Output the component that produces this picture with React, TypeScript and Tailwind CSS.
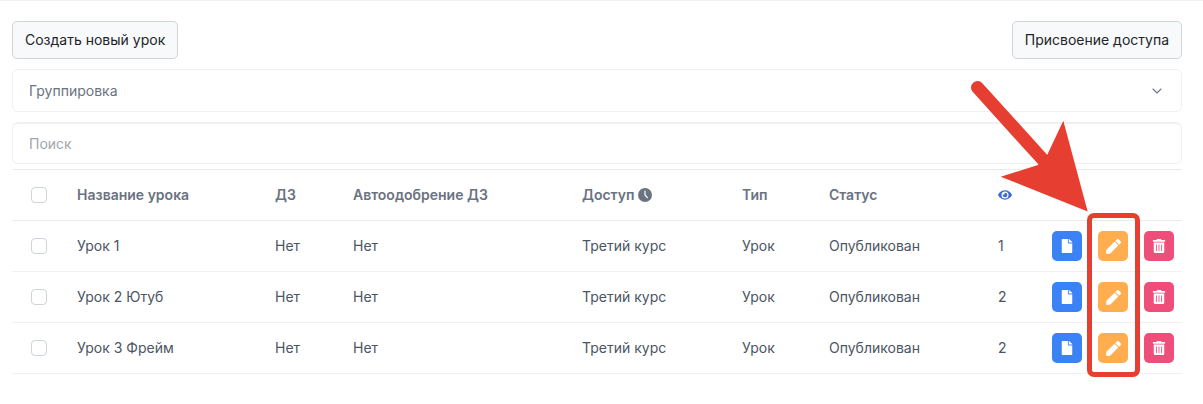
import React from "react";

const gridCols = "grid grid-cols-[65px_198px_78px_229px_160px_87px_169px_54px_1fr] items-center";

function FileIcon() {
  return (
    <svg viewBox="0 0 384 512" className="h-[14px] w-[14px]" fill="#fff">
      <path d="M224 136V0H24C10.7 0 0 10.7 0 24v464c0 13.3 10.7 24 24 24h336c13.3 0 24-10.7 24-24V160H248c-13.2 0-24-10.8-24-24zm160-14.1v6.1H256V0h6.1c6.4 0 12.5 2.5 17 7l97.9 98c4.5 4.5 7 10.6 7 16.9z" />
    </svg>
  );
}
function PenIcon() {
  return (
    <svg viewBox="0 0 512 512" className="h-[15px] w-[15px]" fill="#fff">
      <path d="M290.74 93.24l128.02 128.02-277.99 277.99-114.14 12.6C11.35 513.54-1.56 500.62.14 485.34l12.7-114.22 277.9-277.88zm207.2-19.06l-60.11-60.11c-18.75-18.75-49.16-18.75-67.91 0l-56.55 56.55 128.02 128.02 56.55-56.55c18.75-18.76 18.75-49.16 0-67.91z" />
    </svg>
  );
}
function TrashIcon() {
  return (
    <svg viewBox="0 0 448 512" className="h-[14px] w-[14px]" fill="#fff">
      <path d="M32 464a48 48 0 0 0 48 48h288a48 48 0 0 0 48-48V128H32zm272-256a16 16 0 0 1 32 0v224a16 16 0 0 1-32 0zm-96 0a16 16 0 0 1 32 0v224a16 16 0 0 1-32 0zm-96 0a16 16 0 0 1 32 0v224a16 16 0 0 1-32 0zM432 32H312l-9.4-18.7A24 24 0 0 0 281.1 0H166.8a23.72 23.72 0 0 0-21.4 13.3L136 32H16A16 16 0 0 0 0 48v32a16 16 0 0 0 16 16h416a16 16 0 0 0 16-16V48a16 16 0 0 0-16-16z" />
    </svg>
  );
}
function Checkbox() {
  return <span className="ml-[19px] block h-4 w-4 rounded-[4px] border border-[#ced4da] bg-white" />;
}

const rows = [
  ["Урок 1", "1"],
  ["Урок 2 Ютуб", "2"],
  ["Урок 3 Фрейм", "2"],
];

export default function App() {
  return (
    <div className="relative h-[404px] w-[1203px] overflow-hidden border-t border-[#eff0f6] bg-white font-['Inter',sans-serif] text-sm text-[#4b5563]">
      <div className="ml-3 mr-[21px] pt-5">
        <div className="flex justify-between">
          <button className="h-[38px] rounded-[5px] border border-[#ced4da] bg-[#f8f9fa] px-3 text-[#212529]">Создать новый урок</button>
          <button className="h-[38px] rounded-[5px] border border-[#ced4da] bg-[#f8f9fa] px-3 text-[#212529]">Присвоение доступа</button>
        </div>
        <div className="mt-[10px] flex h-[43px] items-center justify-between rounded-[6px] border border-[#eff0f6] pl-4 pr-4 text-[#6b7280]">
          <span>Группировка</span>
          <svg viewBox="0 0 16 16" className="h-4 w-4" fill="none" stroke="#6b7a90" strokeWidth="1.1" strokeLinecap="round" strokeLinejoin="round">
            <path d="M4 6l4 4 4-4" />
          </svg>
        </div>
        <div className="mt-[10px] flex h-[42px] items-center rounded-[6px] border border-[#eff0f6] border-t-2 pl-4 text-[#a0a5ad]">Поиск</div>
        <div className={`${gridCols} mt-[5px] h-[52px] border-y border-[#e9ecef] font-semibold text-[#6b7280]`}>
          <Checkbox />
          <span>Название урока</span>
          <span>ДЗ</span>
          <span>Автоодобрение ДЗ</span>
          <span className="flex items-center gap-1">
            Доступ
            <svg viewBox="0 0 14 14" className="h-[14px] w-[14px]">
              <circle cx="7" cy="7" r="7" fill="#6b7280" />
              <path d="M7 3v4l2.4 2.6" fill="none" stroke="#fff" strokeWidth="1.2" strokeLinecap="round" />
            </svg>
          </span>
          <span>Тип</span>
          <span>Статус</span>
          <svg viewBox="0 0 576 512" className="h-[14px] w-[14px]" fill="#3f6ad8">
            <path d="M572.52 241.4C518.29 135.59 410.93 64 288 64S57.68 135.64 3.48 241.41a32.35 32.35 0 0 0 0 29.19C57.71 376.41 165.07 448 288 448s230.32-71.64 284.52-177.41a32.35 32.35 0 0 0 0-29.19zM288 400a144 144 0 1 1 144-144 143.93 143.93 0 0 1-144 144zm0-240a95.31 95.31 0 0 0-25.31 3.79 47.85 47.85 0 0 1-66.9 66.9A95.78 95.78 0 1 0 288 160z" />
          </svg>
          <span />
        </div>
        {rows.map(([name, n]) => (
          <div key={name} className={`${gridCols} h-[51px] border-b border-[#eff0f6]`}>
            <Checkbox />
            <span>{name}</span>
            <span>Нет</span>
            <span>Нет</span>
            <span>Третий курс</span>
            <span>Урок</span>
            <span>Опубликован</span>
            <span>{n}</span>
            <div className="flex gap-4">
              <span className="flex h-[30px] w-[30px] items-center justify-center rounded-[5px] bg-[#3b82f6]"><FileIcon /></span>
              <span className="flex h-[30px] w-[30px] items-center justify-center rounded-[5px] bg-[#ffad4f]"><PenIcon /></span>
              <span className="flex h-[30px] w-[30px] items-center justify-center rounded-[5px] bg-[#ef4d7a]"><TrashIcon /></span>
            </div>
          </div>
        ))}
      </div>
      <div className="absolute left-[1087px] top-[212px] h-[164px] w-[53px] rounded-[7px] border-[5px] border-[#e63e30]" />
      <svg className="pointer-events-none absolute left-0 top-0" width="1203" height="404" viewBox="0 0 1203 404">
        <line x1="977.5" y1="86.5" x2="1045" y2="161" stroke="#e63e30" strokeWidth="13" strokeLinecap="round" />
        <polygon points="1087.7,210.5 1000.7,175.7 1038,164 1046.7,155 1063.3,119.7" fill="#e63e30" />
      </svg>
    </div>
  );
}
